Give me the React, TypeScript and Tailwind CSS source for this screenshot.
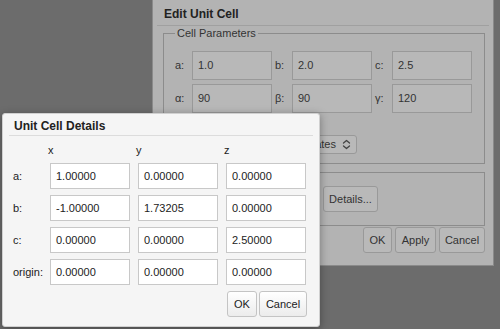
import React from "react";

const font = { fontFamily: '"Liberation Sans", Arial, sans-serif' };

function BackInput({ label, value }: { label: string; value: string }) {
  return (
    <div className="flex items-center">
      <span className="w-[17px] text-[11px] leading-[13px] text-[#333]">{label}</span>
      <div className="w-[80px] h-[29px] border border-[#999] bg-[#b8b8b8] flex items-center pl-[5px] text-[11px] text-[#333]">
        {value}
      </div>
    </div>
  );
}

function BackButton({ children, w }: { children: React.ReactNode; w: string }) {
  return (
    <div className={`${w} h-[26px] rounded-[3px] border border-[#999] bg-[#b9b9b9] flex items-center justify-center text-[11px] text-[#333]`}>
      {children}
    </div>
  );
}

function FrontInput({ value }: { value: string }) {
  return (
    <div className="w-[80px] h-[26px] border border-[#c8c8c8] bg-white flex items-center pl-[5px] text-[11px] text-[#222]">
      {value}
    </div>
  );
}

function FrontButton({ children, w }: { children: React.ReactNode; w: string }) {
  return (
    <div className={`${w} h-[26px] rounded-[3px] border border-[#c4c4c4] bg-gradient-to-b from-white to-[#ececec] flex items-center justify-center text-[11px] text-[#222]`}>
      {children}
    </div>
  );
}

export default function App() {
  const rows: [string, string[]][] = [
    ["a:", ["1.00000", "0.00000", "0.00000"]],
    ["b:", ["-1.00000", "1.73205", "0.00000"]],
    ["c:", ["0.00000", "0.00000", "2.50000"]],
    ["origin:", ["0.00000", "0.00000", "0.00000"]],
  ];
  return (
    <div className="relative w-[500px] h-[329px] overflow-hidden bg-[#6c6c6c]" style={font}>
      {/* Back dialog */}
      <div className="absolute left-[152px] top-[-4px] w-[342px] h-[270px] bg-[#b3b3b3] border border-[#8a8a8a] flex flex-col">
        <div className="h-[29px] mx-[4px] border-b border-[#a0a0a0] flex items-end pb-[4px] pl-[7px] text-[12px] leading-[14px] font-bold text-[#222]">
          Edit Unit Cell
        </div>
        <div className="relative mt-[7px] ml-[10px] w-[322px] h-[131px] border border-[#8c8c8c]">
          <div className="absolute left-[11px] top-[-8px] bg-[#b3b3b3] px-[2px] text-[11px] leading-[14px] text-[#333]">
            Cell Parameters
          </div>
          <div className="pt-[17px] pl-[11px] grid grid-cols-[100px_100px_100px] gap-y-[4px]">
            <BackInput label="a:" value="1.0" />
            <BackInput label="b:" value="2.0" />
            <BackInput label="c:" value="2.5" />
            <BackInput label="α:" value="90" />
            <BackInput label="β:" value="90" />
            <BackInput label="γ:" value="120" />
          </div>
          <div className="mt-[22px] ml-[55px] flex items-center">
            <div className="h-[19px] w-[138px] rounded-[3px] border border-[#999] bg-[#b9b9b9] flex items-center justify-end pr-[5px] gap-[6px] text-[11px] leading-[13px] text-[#333]">
              <span className="whitespace-nowrap shrink-0">Cartesian coordinates</span>
              <svg width="9" height="11" viewBox="0 0 9 11" className="shrink-0">
                <path d="M1.5 4 L4.5 1.5 L7.5 4" fill="none" stroke="#444" strokeWidth="1.3" strokeLinecap="round" strokeLinejoin="round" />
                <path d="M1.5 7 L4.5 9.5 L7.5 7" fill="none" stroke="#444" strokeWidth="1.3" strokeLinecap="round" strokeLinejoin="round" />
              </svg>
            </div>
          </div>
        </div>
        <div className="mt-[8px] ml-[10px] w-[322px] h-[54px] border border-[#8c8c8c] flex items-center pl-[159px]">
          <BackButton w="w-[55px]">Details...</BackButton>
        </div>
        <div className="mt-[1px] mr-[8px] flex justify-end gap-[3px]">
          <BackButton w="w-[29px]">OK</BackButton>
          <BackButton w="w-[41px]">Apply</BackButton>
          <BackButton w="w-[46px]">Cancel</BackButton>
        </div>
      </div>

      {/* Front dialog */}
      <div className="absolute left-[2px] top-[113px] w-[318px] h-[214px] bg-[#f5f5f5] border border-[#d0d0d0] rounded-[3px] shadow-[0_2px_8px_rgba(0,0,0,0.35)] flex flex-col">
        <div className="h-[22px] mx-[6px] border-b border-[#dcdcdc] flex items-end pb-[2px] pl-[5px] text-[12px] leading-[14px] font-bold text-[#222]">
          Unit Cell Details
        </div>
        <div className="mt-[8px] ml-[10px] flex flex-col gap-[6px] text-[11px] leading-[13px] text-[#222]">
          <div className="h-[13px] flex">
            <span className="w-[35px]" />
            <span className="w-[88px]">x</span>
            <span className="w-[88px]">y</span>
            <span className="w-[88px]">z</span>
          </div>
          {rows.map(([label, vals]) => (
            <div key={label} className="flex items-center">
              <span className="w-[37px] whitespace-nowrap">{label}</span>
              <div className="flex gap-[8px]">
                {vals.map((v, i) => (
                  <FrontInput key={i} value={v} />
                ))}
              </div>
            </div>
          ))}
        </div>
        <div className="mt-[6px] mr-[12px] flex justify-end gap-[2px]">
          <FrontButton w="w-[30px]">OK</FrontButton>
          <FrontButton w="w-[48px]">Cancel</FrontButton>
        </div>
      </div>
    </div>
  );
}
